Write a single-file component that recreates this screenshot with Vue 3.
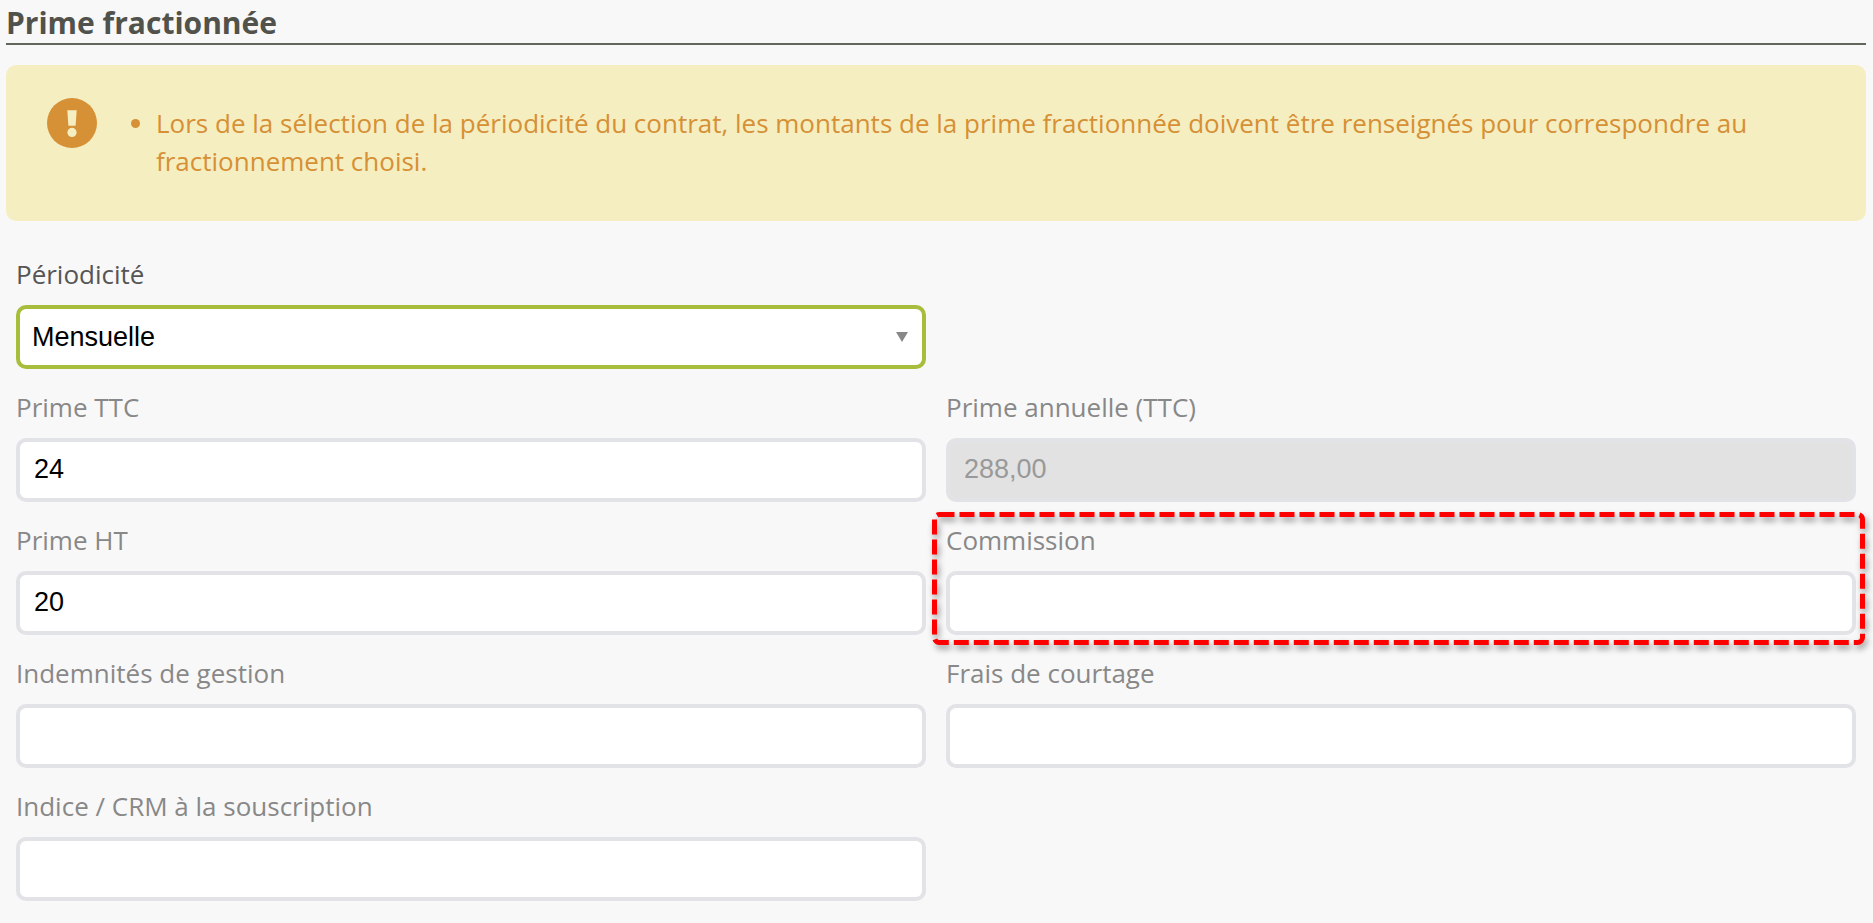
<script setup>
import { ref } from 'vue'

const periodicity = ref('Mensuelle')
const periodicities = ['Mensuelle', 'Trimestrielle', 'Semestrielle', 'Annuelle']

const fields = ref([
  { id: 'prime-ttc', label: 'Prime TTC', value: '24' },
  { id: 'prime-annuelle', label: 'Prime annuelle (TTC)', value: '288,00', disabled: true },
  { id: 'prime-ht', label: 'Prime HT', value: '20' },
  { id: 'commission', label: 'Commission', value: '', highlighted: true },
  { id: 'indemnites', label: 'Indemnités de gestion', value: '' },
  { id: 'frais', label: 'Frais de courtage', value: '' },
  { id: 'indice', label: 'Indice / CRM à la souscription', value: '' }
])
</script>

<template>
  <main class="page">
    <h2 class="title">Prime fractionnée</h2>

    <div class="notice" role="alert">
      <svg class="notice-icon" viewBox="0 0 50 50" aria-hidden="true">
        <circle cx="25" cy="25" r="25" fill="#d69035" />
        <path d="M20.3 12.2h9.4L28.6 27.8h-7.2z" fill="#f5eec1" />
        <circle cx="25" cy="34.4" r="4.6" fill="#f5eec1" />
      </svg>
      <ul class="notice-list">
        <li class="notice-item">
          Lors de la sélection de la périodicité du contrat, les montants de la prime fractionnée doivent être
          renseignés pour correspondre au fractionnement choisi.
        </li>
      </ul>
    </div>

    <form class="form" @submit.prevent>
      <div class="field field-first">
        <label class="label label-active" for="periodicite">Périodicité</label>
        <div class="select-wrap">
          <select id="periodicite" v-model="periodicity" class="control select">
            <option v-for="p in periodicities" :key="p">{{ p }}</option>
          </select>
          <svg class="arrow" viewBox="0 0 12 10" aria-hidden="true">
            <path d="M0 0h12L6 10z" fill="#888" />
          </svg>
        </div>
      </div>

      <div v-for="f in fields" :key="f.id" class="field">
        <label class="label" :for="f.id">{{ f.label }}</label>
        <input :id="f.id" v-model="f.value" class="control" type="text" :disabled="f.disabled" />
        <svg v-if="f.highlighted" class="highlight" aria-hidden="true">
          <rect class="highlight-frame" x="2.5" y="2.5" rx="5" />
        </svg>
      </div>
    </form>
  </main>
</template>

<style>
body {
  background: #f8f8f8;
}
</style>

<style scoped>
.page {
  padding: 0 7px 21px 6px;
  font-family: 'Open Sans', sans-serif;
  font-size: 26px;
}

.title {
  margin: 0;
  padding: 5px 0 2px;
  border-bottom: 2px solid #61665c;
  color: #50524b;
  font-size: 30px;
  line-height: 36px;
  font-weight: 700;
}

.notice {
  display: flex;
  align-items: flex-start;
  gap: 59px;
  margin-top: 20px;
  padding: 33px 40px 41px 41px;
  border-radius: 10px;
  background: #f5eec1;
  color: #d69035;
}

.notice-icon {
  flex: none;
  width: 50px;
  height: 50px;
}

.notice-list {
  flex: 1;
  margin: 0;
  padding: 6px 0 0;
  list-style: none;
}

.notice-item {
  position: relative;
  line-height: 38px;
}

.notice-item::before {
  content: '';
  position: absolute;
  top: 15px;
  left: -25px;
  width: 9px;
  height: 9px;
  border-radius: 50%;
  background: #d69035;
}

.form {
  display: grid;
  grid-template-columns: repeat(2, minmax(0, 1fr));
  gap: 20px;
  padding: 35px 10px 0;
}

.field {
  position: relative;
}

.field-first,
.field-first + .field {
  grid-column: 1;
}

.label {
  display: block;
  margin-bottom: 13px;
  color: #888;
  line-height: 36px;
}

.label-active {
  color: #555;
}

.control {
  display: block;
  box-sizing: border-box;
  width: 100%;
  height: 64px;
  margin: 0;
  padding: 0 14px 2px;
  border: 4px solid #e2e3e7;
  border-radius: 10px;
  background: #fff;
  color: #000;
  font-family: 'Liberation Sans', Arial, sans-serif;
  font-size: 27px;
  outline: none;
}

.control:disabled {
  background: #e2e2e2;
  color: #999;
}

.select-wrap {
  position: relative;
}

.select {
  appearance: none;
  padding: 0 40px 0 12px;
  border-color: #a6be3b;
}

.arrow {
  position: absolute;
  top: 27px;
  right: 18px;
  width: 12px;
  height: 10px;
  pointer-events: none;
}

.highlight {
  position: absolute;
  top: -10px;
  left: -14px;
  width: calc(100% + 23px);
  height: calc(100% + 20px);
  overflow: visible;
  pointer-events: none;
  filter: drop-shadow(2px 4px 3px rgba(0, 0, 0, 0.4));
}

.highlight-frame {
  width: calc(100% - 5px);
  height: calc(100% - 5px);
  fill: none;
  stroke: #f00;
  stroke-width: 5px;
  stroke-dasharray: 15 5;
}
</style>
